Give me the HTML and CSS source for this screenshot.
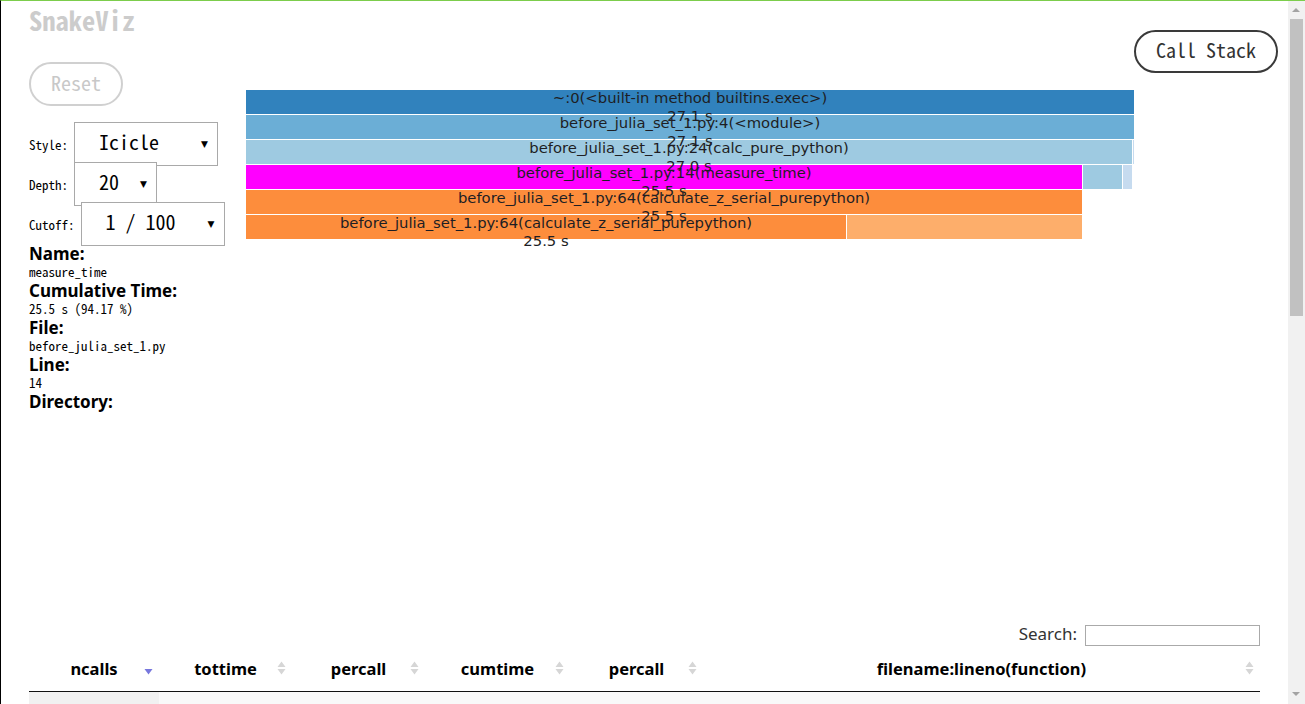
FILE: index.html
```html
<!DOCTYPE html>
<html lang="en">
<head>
<meta charset="utf-8">
<title>SnakeViz</title>
<link rel="stylesheet" href="styles.css">
</head>
<body>
<div class="frame">
  <div class="page">
    <div class="top">
      <aside class="side">
        <h1 class="title">SnakeViz</h1>
        <button class="pill reset">Reset</button>
        <div class="controls">
          <div class="ctl-row">
            <span class="ctl-label">Style:</span>
            <div class="fake-select w144"><span class="sel-text">Icicle</span><span class="sel-arrow">▼</span></div>
          </div>
          <div class="ctl-row">
            <span class="ctl-label">Depth:</span>
            <div class="fake-select w83"><span class="sel-text">20</span><span class="sel-arrow">▼</span></div>
          </div>
          <div class="ctl-row">
            <span class="ctl-label">Cutoff:</span>
            <div class="fake-select w144"><span class="sel-text">1 / 100</span><span class="sel-arrow">▼</span></div>
          </div>
        </div>
        <dl class="info">
          <dt>Name:</dt><dd>measure_time</dd>
          <dt>Cumulative Time:</dt><dd>25.5 s (94.17 %)</dd>
          <dt>File:</dt><dd>before_julia_set_1.py</dd>
          <dt>Line:</dt><dd>14</dd>
          <dt>Directory:</dt><dd></dd>
        </dl>
      </aside>
      <main class="chart-area">
        <div class="btn-row"><button class="pill callstack">Call Stack</button></div>
        <svg class="flame" width="1042" height="160" viewBox="0 0 1042 160">
          <g class="rects">
            <rect x="0" y="0" width="888" height="24" fill="#3182bd"/>
            <rect x="0" y="25" width="888" height="24" fill="#6baed6"/>
            <rect x="0" y="50" width="886" height="24" fill="#9ecae1"/>
            <rect x="887" y="50" width="1" height="24" fill="#c6dbef"/>
            <rect x="0" y="75" width="836" height="24" fill="#ff00ff"/>
            <rect x="837" y="75" width="39" height="24" fill="#9ecae1"/>
            <rect x="877" y="75" width="9" height="24" fill="#c6dbef"/>
            <rect x="0" y="100" width="836" height="24" fill="#fd8d3c"/>
            <rect x="0" y="125" width="600" height="24" fill="#fd8d3c"/>
            <rect x="601" y="125" width="235" height="24" fill="#fdae6b"/>
          </g>
          <g class="labels">
            <text x="444" y="13">~:0(&lt;built-in method builtins.exec&gt;)<tspan x="444" dy="18">27.1 s</tspan></text>
            <text x="444" y="38">before_julia_set_1.py:4(&lt;module&gt;)<tspan x="444" dy="18">27.1 s</tspan></text>
            <text x="443" y="63">before_julia_set_1.py:24(calc_pure_python)<tspan x="443" dy="18">27.0 s</tspan></text>
            <text x="418" y="88">before_julia_set_1.py:14(measure_time)<tspan x="418" dy="18">25.5 s</tspan></text>
            <text x="418" y="113">before_julia_set_1.py:64(calculate_z_serial_purepython)<tspan x="418" dy="18">25.5 s</tspan></text>
            <text x="300" y="138">before_julia_set_1.py:64(calculate_z_serial_purepython)<tspan x="300" dy="18">25.5 s</tspan></text>
          </g>
        </svg>
      </main>
    </div>
    <section class="stats">
      <div class="search-row">
        <label class="search-label" for="q">Search:</label>
        <input id="q" class="search-input" type="text">
      </div>
      <table class="stats-table">
        <colgroup>
          <col class="c1"><col class="c2"><col class="c3"><col class="c4"><col class="c5"><col class="c6">
        </colgroup>
        <thead>
          <tr>
            <th class="sorted">ncalls<svg class="sort" width="9" height="14" viewBox="0 0 9 14"><path d="M0.5 8h8l-4 5.5z" fill="#7777dd"/></svg></th>
            <th>tottime<svg class="sort" width="9" height="14" viewBox="0 0 9 14"><path d="M4.5 0.5l4 5.5h-8z M0.5 8h8l-4 5.5z" fill="#d6d6d6"/></svg></th>
            <th>percall<svg class="sort" width="9" height="14" viewBox="0 0 9 14"><path d="M4.5 0.5l4 5.5h-8z M0.5 8h8l-4 5.5z" fill="#d6d6d6"/></svg></th>
            <th>cumtime<svg class="sort" width="9" height="14" viewBox="0 0 9 14"><path d="M4.5 0.5l4 5.5h-8z M0.5 8h8l-4 5.5z" fill="#d6d6d6"/></svg></th>
            <th>percall<svg class="sort" width="9" height="14" viewBox="0 0 9 14"><path d="M4.5 0.5l4 5.5h-8z M0.5 8h8l-4 5.5z" fill="#d6d6d6"/></svg></th>
            <th>filename:lineno(function)<svg class="sort" width="9" height="14" viewBox="0 0 9 14"><path d="M4.5 0.5l4 5.5h-8z M0.5 8h8l-4 5.5z" fill="#d6d6d6"/></svg></th>
          </tr>
        </thead>
        <tbody>
          <tr>
            <td class="sorted-cell"></td><td></td><td></td><td></td><td></td><td></td>
          </tr>
        </tbody>
      </table>
    </section>
  </div>
  <div class="scrollbar">
    <span class="sb-up"></span>
    <span class="sb-thumb"></span>
    <span class="sb-down"></span>
  </div>
</div>
</body>
</html>
```
FILE: styles.css
```css
html, body {
  margin: 0;
  padding: 0;
  background: #fff;
}
body {
  width: 1305px;
  height: 704px;
  overflow: hidden;
}
.frame {
  position: relative;
  width: 1305px;
  height: 704px;
  box-sizing: border-box;
  border-top: 1px solid #7ccd4c;
  border-left: 1px solid #000;
  padding-right: 17px;
  overflow: hidden;
}
.page {
  width: 1287px;
}
.top {
  display: flex;
  height: 600px;
}
.side {
  width: 245px;
  box-sizing: border-box;
  padding-left: 28px;
  flex: none;
}
.title {
  margin: 4px 0 0 0;
  font-family: "Noto Sans Mono CJK JP", "DejaVu Sans Mono", monospace;
  font-weight: bold;
  font-size: 26.5px;
  line-height: 30px;
  color: #cccccc;
}
.pill {
  display: block;
  box-sizing: border-box;
  background: #fff;
  border-radius: 22px;
  font-family: "Noto Sans Mono CJK JP", "Liberation Mono", monospace;
  font-size: 20px;
  font-weight: normal;
  padding: 0 0 4px 0;
  cursor: pointer;
}
.reset {
  margin-top: 27px;
  width: 94px;
  height: 44px;
  border: 2px solid #d0d0d0;
  color: #c8c8c8;
}
.controls {
  margin-top: 18px;
  display: flex;
  flex-direction: column;
}
.ctl-row {
  height: 40px;
  display: flex;
  align-items: center;
  gap: 6px;
}
.ctl-label {
  font-family: "Noto Sans Mono CJK JP", "Liberation Mono", monospace;
  font-size: 13px;
  color: #000;
}
.fake-select {
  height: 44px;
  flex: none;
  box-sizing: border-box;
  border: 1px solid #a9a9a9;
  background: #fff;
  display: flex;
  align-items: center;
  justify-content: space-between;
  padding: 0 9px 0 24px;
}
.w144 { width: 144px; }
.w83 { width: 83px; }
.sel-text {
  font-family: "Noto Sans Mono CJK JP", "Liberation Mono", monospace;
  font-size: 20px;
  line-height: 24px;
  padding-bottom: 4px;
  color: #000;
}
.sel-arrow {
  font-size: 9px;
  color: #000;
  font-family: "DejaVu Sans", sans-serif;
}
.info {
  margin: 0;
  padding: 0;
}
.info dt {
  font-family: "Noto Sans", sans-serif;
  font-weight: bold;
  font-size: 17px;
  line-height: 19px;
  color: #000;
  margin: 0;
}
.info dd {
  font-family: "Noto Sans Mono CJK JP", "Liberation Mono", monospace;
  font-size: 13px;
  line-height: 18px;
  margin: 0;
  color: #000;
  min-height: 18px;
}
.chart-area {
  flex: 1;
  display: flex;
  flex-direction: column;
}
.btn-row {
  display: flex;
  justify-content: flex-end;
  padding-top: 29px;
  padding-right: 10px;
}
.callstack {
  width: 144px;
  height: 43px;
  border: 2px solid #3a3a3a;
  color: #333;
}
.flame {
  display: block;
  margin-top: 17px;
}
.flame text {
  font-family: "DejaVu Sans", "Verdana", sans-serif;
  font-size: 14.8px;
  fill: #1e1e24;
  text-anchor: middle;
}
.stats {
  padding: 0 28px;
}
.search-row {
  margin-top: 24px;
  height: 21px;
  display: flex;
  justify-content: flex-end;
  align-items: center;
  gap: 8px;
}
.search-label {
  font-family: "Noto Sans", sans-serif;
  font-size: 17px;
  line-height: 20px;
  padding-bottom: 3px;
  color: #333;
}
.search-input {
  width: 175px;
  height: 21px;
  box-sizing: border-box;
  border: 1px solid #aaa;
  margin: 0;
  padding: 0 4px;
}
.stats-table {
  width: 1231px;
  table-layout: fixed;
  border-collapse: collapse;
  font-family: "Noto Sans", sans-serif;
}
.c1 { width: 130px; }
.c2 { width: 133px; }
.c3 { width: 133px; }
.c4 { width: 145px; }
.c5 { width: 133px; }
.c6 { width: 557px; }
.stats-table th {
  position: relative;
  height: 44px;
  padding: 0 0 1px 0;
  font-size: 16.5px;
  font-weight: bold;
  color: #000;
  text-align: center;
  border-bottom: 1px solid #111;
  vertical-align: middle;
}
.sort {
  position: absolute;
  right: 6px;
  top: 15px;
}
.stats-table td {
  height: 30px;
  padding: 0;
  background: #f9f9f9;
}
.stats-table td.sorted-cell {
  background: #f1f1f1;
}
.scrollbar {
  position: absolute;
  top: 0;
  right: 0;
  width: 17px;
  height: 703px;
  background: #f1f1f1;
}
.sb-up, .sb-down {
  position: absolute;
  left: 4px;
  width: 0;
  height: 0;
  border-left: 4px solid transparent;
  border-right: 4px solid transparent;
}
.sb-up {
  top: 7px;
  border-bottom: 4px solid #a3a3a3;
}
.sb-down {
  bottom: 8px;
  border-top: 4px solid #a3a3a3;
}
.sb-thumb {
  position: absolute;
  left: 2px;
  top: 18px;
  width: 13px;
  height: 297px;
  background: #c1c1c1;
}
```
